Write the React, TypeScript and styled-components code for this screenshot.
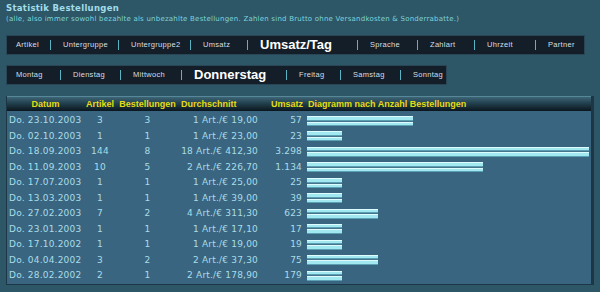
import React from "react"
import styled, { createGlobalStyle } from "styled-components"

const GlobalStyle = createGlobalStyle`
  html, body {
    margin: 0;
    padding: 0;
    background: #2d5666;
  }
  body {
    width: 600px;
    height: 292px;
    overflow: hidden;
  }
`

const Page = styled.div`
  padding: 3px 6px 0;
  font-family: "DejaVu Sans", Verdana, sans-serif;
`

const Title = styled.h1`
  margin: 0;
  font-size: 8.5px;
  font-weight: bold;
  line-height: 11px;
  letter-spacing: 0.3px;
  color: #a2dde9;
`

const Note = styled.p`
  margin: 1px 0 0;
  font-size: 7px;
  line-height: 9px;
  letter-spacing: 0.22px;
  color: #7ed3dc;
  white-space: nowrap;
`

const NavBar = styled.nav<{ $mt: number }>`
  display: flex;
  align-items: center;
  width: fit-content;
  height: 18px;
  margin-top: ${(p) => p.$mt}px;
  padding-left: 9px;
  background: #141e28;
  border: 1px solid #294656;
`

const NavItem = styled.span<{ $w: number; $active?: boolean }>`
  flex: none;
  width: ${(p) => p.$w}px;
  white-space: nowrap;
  font-family: "Liberation Sans", Arial, sans-serif;
  font-size: ${(p) => (p.$active ? "13px" : "7.5px")};
  font-weight: ${(p) => (p.$active ? "bold" : "normal")};
  letter-spacing: ${(p) => (p.$active ? "0" : "0.3px")};
  color: ${(p) => (p.$active ? "#ffffff" : "#d6dfe4")};
  line-height: 18px;
`

const Sep = styled.span`
  flex: none;
  width: 1px;
  height: 10px;
  margin-right: 12px;
  background: #5ab4c4;
`

const Grid = styled.table`
  box-sizing: border-box;
  margin-top: 11px;
  width: 588px;
  table-layout: fixed;
  border-collapse: separate;
  border-spacing: 0;
  background: #3a6580;
  border: 1px solid #1c3646;
  border-top: 0;
  border-right-width: 3px;
`

type Align = "left" | "center" | "right"

const Head = styled.th<{ $align: Align; $pad?: number }>`
  padding: 0 ${(p) => (p.$align === "right" ? p.$pad ?? 0 : 0)}px 0
    ${(p) => (p.$align === "left" ? p.$pad ?? 0 : 0)}px;
  text-align: ${(p) => p.$align};
  line-height: 14px;
  border-top: 1px solid #56889a;
  background: linear-gradient(to bottom, #3d6575, #22404e 45%, #0b161d);
  font-family: "Liberation Sans", Arial, sans-serif;
  font-size: 9px;
  font-weight: bold;
  color: #e6dc12;
  white-space: nowrap;
  overflow: hidden;
`

const Row = styled.tr`
  &:first-child td {
    padding-top: 2px;
  }
`

const Cell = styled.td<{ $align: Align; $pad?: number }>`
  padding: 0 ${(p) => (p.$align === "right" ? p.$pad ?? 0 : 0)}px 0
    ${(p) => (p.$align === "left" ? p.$pad ?? 0 : 0)}px;
  text-align: ${(p) => p.$align};
  line-height: 15.5px;
  font-size: 9px;
  letter-spacing: 0.2px;
  color: #a8dde8;
  white-space: nowrap;
  vertical-align: middle;
`

const Bar = styled.div`
  height: 10px;
  background: linear-gradient(
    to bottom,
    #dcfcff 0 1px,
    #a2e8f1 1px 3.5px,
    #5b9fb2 3.5px 4.5px,
    #46748c 4.5px 5.5px,
    #dcfcff 5.5px 6.5px,
    #a2e8f1 6.5px 9px,
    #5b9fb2 9px 10px
  );
`

const topNav = [
  { label: "Artikel", w: 34 },
  { label: "Untergruppe", w: 55 },
  { label: "Untergruppe2", w: 59 },
  { label: "Umsatz", w: 44 },
  { label: "Umsatz/Tag", w: 97, active: true },
  { label: "Sprache", w: 47 },
  { label: "Zahlart", w: 44 },
  { label: "Uhrzeit", w: 48 },
  { label: "Partner", w: 36 },
]

const dayNav = [
  { label: "Montag", w: 44 },
  { label: "Dienstag", w: 47 },
  { label: "Mittwoch", w: 48 },
  { label: "Donnerstag", w: 92, active: true },
  { label: "Freitag", w: 41 },
  { label: "Samstag", w: 47 },
  { label: "Sonntag", w: 33 },
]

const rows: [string, number, number, string, string][] = [
  ["Do. 23.10.2003", 3, 3, "1 Art./€ 19,00", "57"],
  ["Do. 02.10.2003", 1, 1, "1 Art./€ 23,00", "23"],
  ["Do. 18.09.2003", 144, 8, "18 Art./€ 412,30", "3.298"],
  ["Do. 11.09.2003", 10, 5, "2 Art./€ 226,70", "1.134"],
  ["Do. 17.07.2003", 1, 1, "1 Art./€ 25,00", "25"],
  ["Do. 13.03.2003", 1, 1, "1 Art./€ 39,00", "39"],
  ["Do. 27.02.2003", 7, 2, "4 Art./€ 311,30", "623"],
  ["Do. 23.01.2003", 1, 1, "1 Art./€ 17,10", "17"],
  ["Do. 17.10.2002", 1, 1, "1 Art./€ 19,00", "19"],
  ["Do. 04.04.2002", 3, 2, "2 Art./€ 37,30", "75"],
  ["Do. 28.02.2002", 2, 1, "2 Art./€ 178,90", "179"],
]

const maxOrders = 8
const maxBar = 282

function Nav({ items, mt }: { items: { label: string; w: number; active?: boolean }[]; mt: number }) {
  return (
    <NavBar $mt={mt}>
      {items.map((it, i) => (
        <React.Fragment key={it.label}>
          {i > 0 && <Sep />}
          <NavItem $w={it.w} $active={it.active}>
            {it.label}
          </NavItem>
        </React.Fragment>
      ))}
    </NavBar>
  )
}

export default function App() {
  return (
    <Page>
      <GlobalStyle />
      <Title>Statistik Bestellungen</Title>
      <Note>
        (alle, also immer sowohl bezahlte als unbezahlte Bestellungen. Zahlen sind Brutto ohne Versandkosten &amp;
        Sonderrabatte.)
      </Note>
      <Nav items={topNav} mt={11} />
      <Nav items={dayNav} mt={10} />
      <Grid>
        <colgroup>
          <col style={{ width: 77 }} />
          <col style={{ width: 32 }} />
          <col style={{ width: 63 }} />
          <col style={{ width: 81 }} />
          <col style={{ width: 45 }} />
          <col />
        </colgroup>
        <thead>
          <tr>
            <Head $align="center">Datum</Head>
            <Head $align="center">Artikel</Head>
            <Head $align="center">Bestellungen</Head>
            <Head $align="left" $pad={2}>
              Durchschnitt
            </Head>
            <Head $align="right" $pad={2}>
              Umsatz
            </Head>
            <Head $align="left" $pad={3}>
              Diagramm nach Anzahl Bestellungen
            </Head>
          </tr>
        </thead>
        <tbody>
          {rows.map(([date, items, orders, avg, sum]) => (
            <Row key={date}>
              <Cell $align="left" $pad={2}>
                {date}
              </Cell>
              <Cell $align="center">{items}</Cell>
              <Cell $align="center">{orders}</Cell>
              <Cell $align="right" $pad={2}>
                {avg}
              </Cell>
              <Cell $align="right" $pad={3}>
                {sum}
              </Cell>
              <Cell $align="left" $pad={2}>
                <Bar style={{ width: Math.round((orders / maxOrders) * maxBar) }} />
              </Cell>
            </Row>
          ))}
        </tbody>
      </Grid>
    </Page>
  )
}
